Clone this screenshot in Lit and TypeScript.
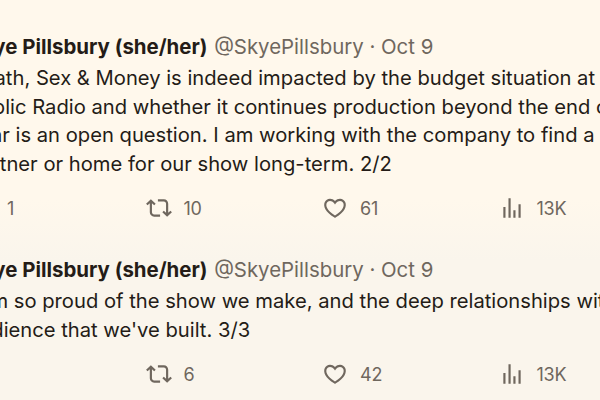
import { LitElement, html, css, svg } from "lit";
import { customElement } from "lit/decorators.js";

const icons = {
  reply: svg`<path d="M1.751 10c0-4.42 3.584-8 8.005-8h4.366c4.49 0 8.129 3.64 8.129 8.13 0 2.96-1.607 5.68-4.196 7.11l-8.054 4.46v-3.69h-.067c-4.49.1-8.183-3.51-8.183-8.01zm8.005-6c-3.317 0-6.005 2.69-6.005 6 0 3.37 2.77 6.08 6.138 6.01l.351-.01h1.761v2.3l5.087-2.81c1.951-1.08 3.163-3.13 3.163-5.36 0-3.39-2.744-6.13-6.129-6.13H9.756z"/>`,
  retweet: svg`<path d="M4.5 3.88l4.432 4.14-1.364 1.46L5.5 7.55V16c0 1.1.896 2 2 2H13v2H7.5c-2.209 0-4-1.79-4-4V7.55L1.432 9.48.068 8.02 4.5 3.88zM16.5 6H11V4h5.5c2.209 0 4 1.79 4 4v8.45l2.068-1.93 1.364 1.46-4.432 4.14-4.432-4.14 1.364-1.46 2.068 1.93V8c0-1.1-.896-2-2-2z"/>`,
  heart: svg`<path d="M16.697 5.5c-1.222-.06-2.679.51-3.89 2.16l-.805 1.09-.806-1.09C9.984 6.01 8.526 5.44 7.304 5.5c-1.243.07-2.349.78-2.91 1.91-.552 1.12-.633 2.78.479 4.82 1.074 1.97 3.257 4.27 7.129 6.61 3.87-2.34 6.052-4.64 7.126-6.61 1.111-2.04 1.03-3.7.477-4.82-.561-1.13-1.666-1.84-2.908-1.91zm4.187 7.69c-1.351 2.48-4.001 5.12-8.379 7.67l-.503.3-.504-.3c-4.379-2.55-7.029-5.19-8.382-7.67-1.36-2.5-1.41-4.86-.514-6.67.887-1.79 2.647-2.91 4.601-3.01 1.651-.09 3.368.56 4.798 2.01 1.429-1.45 3.146-2.1 4.796-2.01 1.954.1 3.714 1.22 4.601 3.01.896 1.81.846 4.17-.514 6.67z"/>`,
  views: svg`<path d="M8.75 21V3h2v18h-2zM18 21V8.5h2V21h-2zM4 21l.004-10h2L6 21H4zm9.248 0v-7h2v7h-2z"/>`,
};

@customElement("app-root")
export class AppRoot extends LitElement {
  static styles = css`
    :host {
      display: block;
      width: 600px;
      height: 400px;
      overflow: hidden;
      background: linear-gradient(#fff8ec 0, #fff8ec 200px, #faf5ec 260px, #faf5ec 100%);
      font-family: "Inter", "Liberation Sans", sans-serif;
      color: #241c17;
    }
    .feed {
      display: flex;
      flex-direction: column;
      padding-top: 33px;
      margin-left: -32px;
      width: 720px;
    }
    .tweet { display: flex; flex-direction: column; }
    .tweet + .tweet { margin-top: 35px; }
    .head {
      font-size: 20.4px;
      line-height: 28px;
      white-space: nowrap;
    }
    .name { font-weight: 700; }
    .meta { color: #6f675e; font-weight: 400; margin-left: 1px; }
    .body { margin-top: 3px; font-size: 20.2px; line-height: 28.5px; }
    .line { white-space: nowrap; }
    .actions {
      display: grid;
      grid-template-columns: repeat(4, 176.5px);
      margin-top: 17px;
      margin-left: 1px;
      height: 26px;
      align-items: center;
    }
    .act {
      display: flex;
      align-items: center;
      gap: 12px;
      color: #6f675e;
      font-size: 18px;
      letter-spacing: -0.2px;
    }
    svg { width: 26px; height: 26px; fill: currentColor; flex: none; }
  `;

  private tweet(lines: string[], counts: string[]) {
    const keys: (keyof typeof icons)[] = ["reply", "retweet", "heart", "views"];
    return html`<article class="tweet">
      <div class="head"><span class="name">Skye Pillsbury (she/her)</span> <span class="meta">@SkyePillsbury · Oct 9</span></div>
      <div class="body">${lines.map((l) => html`<div class="line">${l}</div>`)}</div>
      <div class="actions">
        ${keys.map((k, i) => html`<div class="act"><svg viewBox="0 0 24 24">${icons[k]}</svg><span>${counts[i]}</span></div>`)}
      </div>
    </article>`;
  }

  render() {
    return html`<div class="feed">
      ${this.tweet(
        [
          "Death, Sex & Money is indeed impacted by the budget situation at",
          "Public Radio and whether it continues production beyond the end of",
          "year is an open question. I am working with the company to find a new",
          "partner or home for our show long-term. 2/2",
        ],
        ["1", "10", "61", "13K"]
      )}
      ${this.tweet(
        [
          "I am so proud of the show we make, and the deep relationships with",
          "audience that we've built. 3/3",
        ],
        ["", "6", "42", "13K"]
      )}
    </div>`;
  }
}
